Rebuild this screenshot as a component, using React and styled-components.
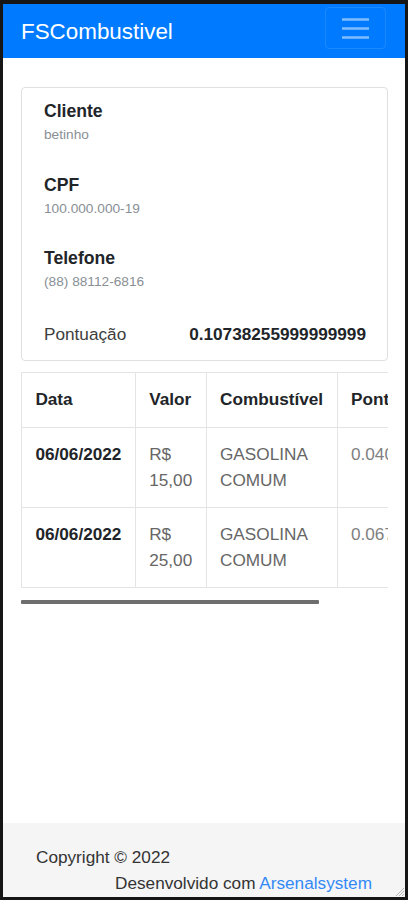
import React from "react";
import styled, { createGlobalStyle } from "styled-components";

const GlobalStyle = createGlobalStyle`
  * { box-sizing: border-box; }
  html { font-size: 17.2px; }
  body {
    margin: 0;
    background: #161616;
    font-family: "Liberation Sans", Arial, Helvetica, sans-serif;
    line-height: 1.5;
    color: #212529;
  }
`;

const Frame = styled.div`
  margin: 4px 3px 3px;
  height: 893px;
  background: #fff;
  display: flex;
  flex-direction: column;
  overflow: hidden;
`;

const Navbar = styled.nav`
  flex: none;
  display: flex;
  align-items: center;
  justify-content: space-between;
  height: 54px;
  padding: 0 19px 0 18px;
  background: #007bff;
`;

const Brand = styled.span`
  font-size: 22.4px;
  line-height: 33px;
  color: #fff;
`;

const Toggler = styled.button`
  align-self: flex-start;
  margin-top: 3px;
  width: 61px;
  height: 42px;
  padding: 0;
  border: 1px solid rgba(255, 255, 255, 0.1);
  border-radius: 4px;
  background: transparent;
  display: flex;
  align-items: center;
  justify-content: center;
`;

const Main = styled.main`
  flex: 1;
  padding: 29px 17px 0 18px;
`;

const Card = styled.section`
  border: 1px solid #e0e0e0;
  border-radius: 4px;
  padding: 13px 21px 13px 22px;
`;

const Field = styled.div`
  margin-bottom: 29px;
`;

const FieldTitle = styled.h5`
  margin: 0 0 3px;
  font-size: 17.6px;
  line-height: 21px;
  font-weight: 700;
  color: #212529;
`;

const FieldValue = styled.div`
  font-size: 13.7px;
  line-height: 20.5px;
  color: #8a8f95;
`;

const ScoreRow = styled.div`
  display: flex;
  justify-content: space-between;
  line-height: 25.8px;
`;

const ScoreLabel = styled.span`
  color: #3d3d3d;
`;

const ScoreValue = styled.span`
  font-weight: 700;
  color: #212529;
`;

const TableWrap = styled.div`
  margin-top: 11px;
  overflow: hidden;
`;

const Table = styled.table`
  width: 100%;
  border-collapse: collapse;
  margin-bottom: 12px;
`;

const Th = styled.th`
  border: 1px solid #e2e4e6;
  padding: 14px 13.4px;
  text-align: left;
  vertical-align: bottom;
  font-weight: 700;
  color: #212529;
  line-height: 25.8px;
  ${(p) => (p.$wide ? "width: 105px; box-sizing: content-box;" : "")}
`;

const Td = styled.td`
  border: 1px solid #e2e4e6;
  padding: 14.4px 13.4px 12.8px;
  vertical-align: top;
  line-height: 25.8px;
  font-weight: ${(p) => (p.$bold ? 700 : 400)};
  color: ${(p) => (p.$bold ? "#212529" : p.$light ? "#808080" : "#666")};
`;

const ScrollTrack = styled.div`
  height: 4px;
`;

const ScrollThumb = styled.div`
  width: 298px;
  height: 100%;
  background: #6e6e6e;
  border-radius: 1px;
`;

const Footer = styled.footer`
  position: relative;
  flex: none;
  height: 74px;
  background: #f5f5f5;
  padding: 22px 33px 0 33px;
  color: #333;
`;

const Copy = styled.div`
  line-height: 25.8px;
`;

const Dev = styled.div`
  text-align: right;
  line-height: 25px;
`;

const Link = styled.a`
  color: #3189f7;
  text-decoration: none;
`;

const Grip = styled.svg`
  position: absolute;
  right: 0;
  bottom: 0;
`;

const fields = [
  { title: "Cliente", value: "betinho" },
  { title: "CPF", value: "100.000.000-19" },
  { title: "Telefone", value: "(88) 88112-6816" },
];

const rows = [
  { data: "06/06/2022", valor: "R$ 15,00", comb: "GASOLINA COMUM", pont: "0.04026846" },
  { data: "06/06/2022", valor: "R$ 25,00", comb: "GASOLINA COMUM", pont: "0.0671141" },
];

export default function App() {
  return (
    <>
      <GlobalStyle />
      <Frame>
        <Navbar>
          <Brand>FSCombustivel</Brand>
          <Toggler aria-label="menu">
            <svg width="27" height="21" viewBox="0 0 27 21">
              <path
                d="M0 1.5h27M0 10.5h27M0 19.5h27"
                stroke="rgba(255,255,255,0.5)"
                strokeWidth="2.4"
              />
            </svg>
          </Toggler>
        </Navbar>
        <Main>
          <Card>
            {fields.map((f) => (
              <Field key={f.title}>
                <FieldTitle>{f.title}</FieldTitle>
                <FieldValue>{f.value}</FieldValue>
              </Field>
            ))}
            <ScoreRow>
              <ScoreLabel>Pontuação</ScoreLabel>
              <ScoreValue>0.10738255999999999</ScoreValue>
            </ScoreRow>
          </Card>
          <TableWrap>
            <Table>
              <thead>
                <tr>
                  <Th>Data</Th>
                  <Th>Valor</Th>
                  <Th>Combustível</Th>
                  <Th $wide>Pontuação</Th>
                </tr>
              </thead>
              <tbody>
                {rows.map((r, i) => (
                  <tr key={i}>
                    <Td $bold>{r.data}</Td>
                    <Td>{r.valor}</Td>
                    <Td>{r.comb}</Td>
                    <Td $light>{r.pont}</Td>
                  </tr>
                ))}
              </tbody>
            </Table>
          </TableWrap>
          <ScrollTrack>
            <ScrollThumb />
          </ScrollTrack>
        </Main>
        <Footer>
          <Copy>Copyright © 2022</Copy>
          <Dev>
            Desenvolvido com <Link href="#">Arsenalsystem</Link>
          </Dev>
          <Grip width="11" height="11" viewBox="0 0 11 11">
            <path d="M10 2L2 10M10 5L5 10M10 8L8 10" stroke="#b5b5b5" strokeWidth="1" />
          </Grip>
        </Footer>
      </Frame>
    </>
  );
}
